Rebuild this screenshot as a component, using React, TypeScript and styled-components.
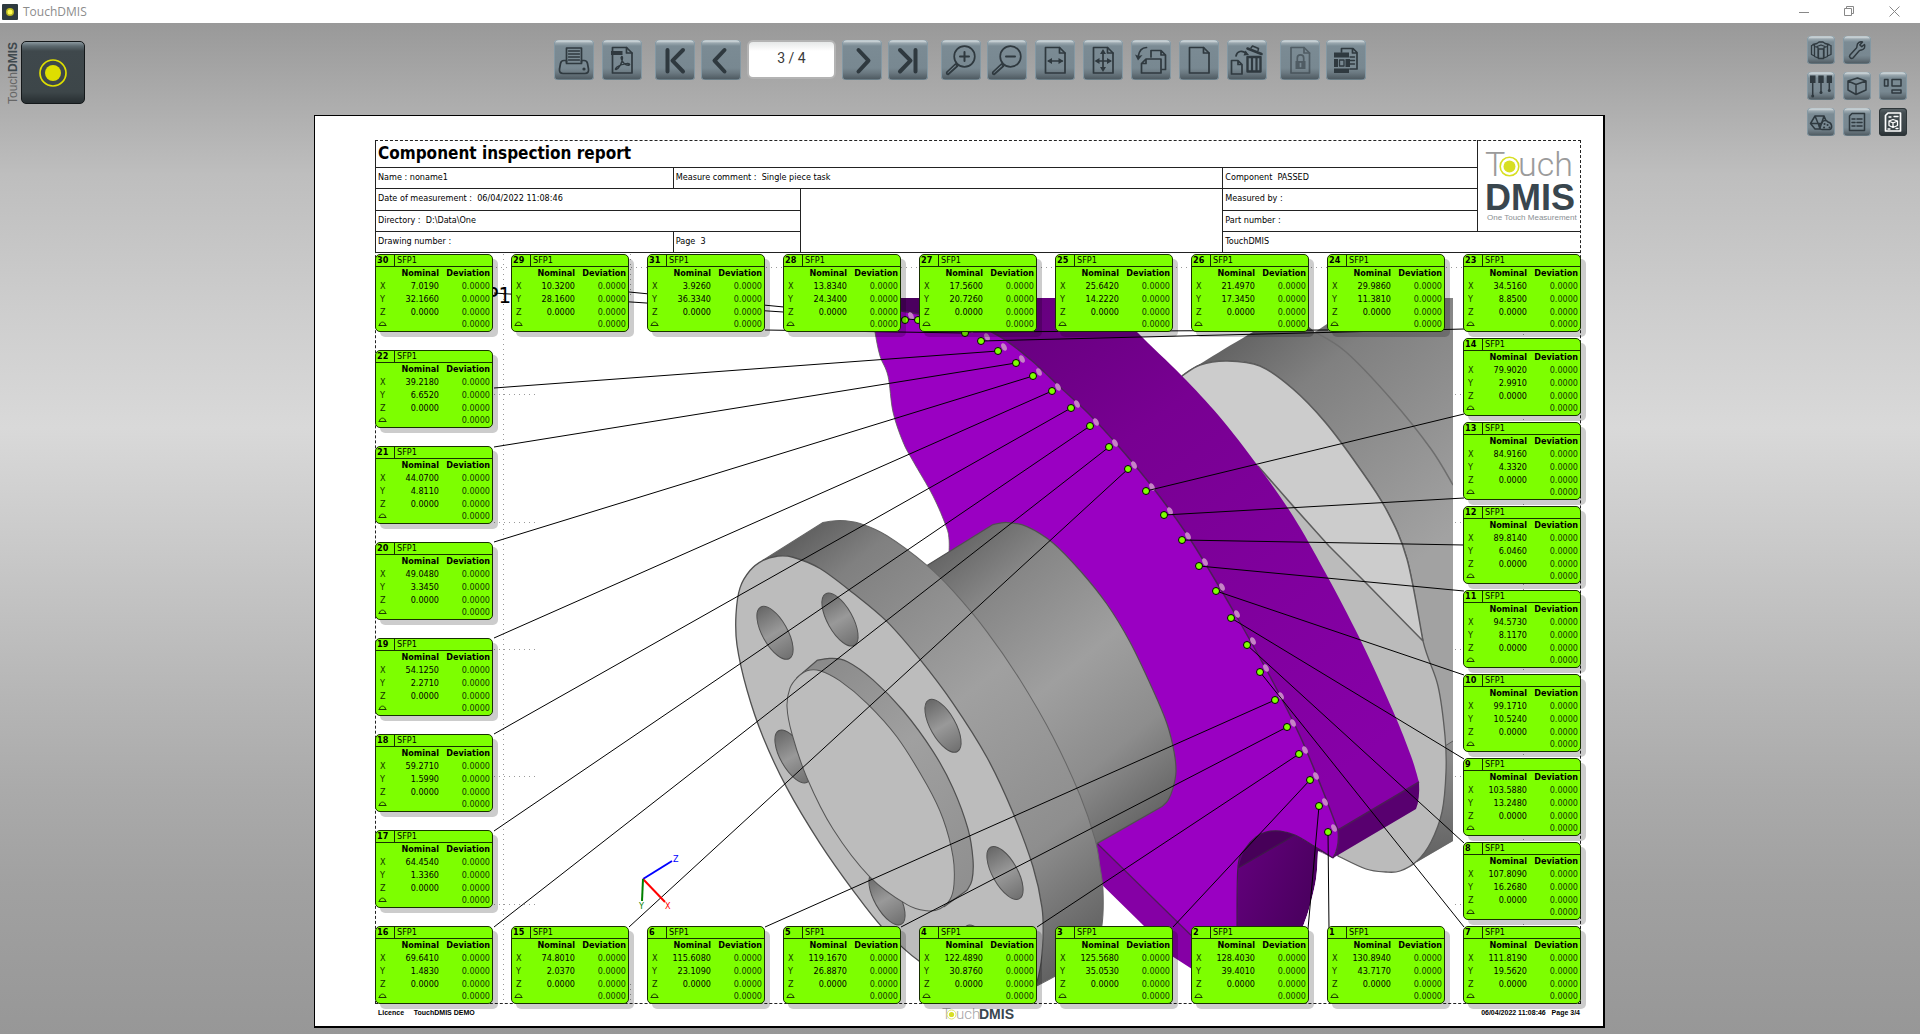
import React from "react";
import styled, { createGlobalStyle, css } from "styled-components";

const GlobalStyle = createGlobalStyle`
  *, *::before, *::after { box-sizing: border-box; }
  body { margin: 0; background: #999; }
  button, input { font: inherit; }
`;

const ink = "#2f393f";
const lime = "#7dff00";
const uiFont = `"DejaVu Sans Condensed", "DejaVu Sans", sans-serif`;
const brandFont = `"Liberation Sans", Arial, sans-serif`;

/* ---------- window ---------- */

const Window = styled.div`
  min-height: 100vh;
  display: flex;
  flex-direction: column;
  font-family: ${uiFont};
  color: #000;
`;

const TitleBar = styled.header`
  height: 23px;
  padding: 0 12px 0 2px;
  background: #fff;
  display: flex;
  align-items: center;
  gap: 5px;
`;

const WindowTitle = styled.h1`
  margin: 0;
  flex: 1;
  font: 400 12px/20px "Open Sans", "Noto Sans", sans-serif;
  color: #8c8c8c;
`;

const CaptionButtons = styled.div`
  display: flex;
  gap: 17px;
`;

const CaptionButton = styled.button`
  width: 28px;
  height: 20px;
  padding: 0;
  border: 0;
  background: none;
  display: grid;
  place-items: center;
`;

const Workspace = styled.main`
  flex: 1;
  display: grid;
  grid-template-columns: 314fr 1291fr 315fr;
  align-items: start;
  padding-bottom: 6px;
  background: linear-gradient(#999 0%, #a8a8a8 6%, #bebebe 15%, #cdcdcd 28%, #d9d9d9 40%, #c9c9c9 52%, #b5b5b5 67%, #aaa 76%, #a1a1a1 85%, #979797 100%);
`;

const Brand = styled.div`
  display: flex;
  padding: 18px 0 0 6px;
`;

const BrandText = styled.span`
  writing-mode: vertical-rl;
  transform: rotate(180deg);
  width: 15px;
  font: 12px/15px ${brandFont};
  color: #666;
  b { color: #3e484d; }
`;

const BrandButton = styled.button`
  width: 64px;
  height: 63px;
  padding: 0;
  border: 1px solid #14181a;
  border-radius: 5px;
  background: linear-gradient(#8b989f 0, #5c696f 4px, #3f484c 9px, #3d4649 50px, #272e31 100%);
  display: grid;
  place-items: center;
`;

const Centre = styled.div`
  padding-top: 17px;
  display: flex;
  flex-direction: column;
  gap: 35px;
`;

const Toolbar = styled.div`
  display: flex;
  justify-content: center;
  gap: 13px;
  padding-left: 1px;
`;

const Group = styled.div<{ $gap: number }>`
  display: flex;
  gap: ${(p) => p.$gap}px;
`;

const ToolButton = styled.button<{ $size?: number; $active?: boolean }>`
  width: ${(p) => p.$size ?? 40}px;
  height: ${(p) => p.$size ?? 40}px;
  padding: 0;
  border: 0;
  border-radius: 4px;
  background: linear-gradient(#aab9c0 0, #d3dbde 1px, #9aa8af 3px, #7b8b94 6px, #788891 70%, #6b7981 82%, #505c63 97%, #7b929d 100%);
  box-shadow: inset 1px 0 #8498a3, inset -1px 0 #8498a3;
  display: grid;
  place-items: center;
  svg { display: block; }
  ${(p) =>
    p.$active &&
    css`
      background: linear-gradient(#5e686d 0, #434c50 5px, #3a4347 80%, #262d30 100%);
      box-shadow: inset 0 0 0 1px #2e3639;
    `}
`;

const PageInput = styled.input`
  width: 89px;
  height: 39px;
  padding: 0 0 3px;
  border: 2px solid #b3b3b3;
  border-radius: 6px;
  background: linear-gradient(#e6e8e8, #fff 9px);
  font: 400 14px/20px Roboto, sans-serif;
  color: #3a3a3a;
  text-align: center;
`;

const Tools = styled.nav`
  justify-self: end;
  padding: 13px 13px 0 0;
  display: grid;
  grid-template-columns: repeat(3, 28px);
  gap: 8px;
`;

const RowEnd = styled.span``;

/* ---------- report sheet ---------- */

const Sheet = styled.article`
  background: #fff;
  border: solid #000;
  border-width: 1px 2px 2px 1px;
  padding: 24px 22px 0 60px;
`;

const Frame = styled.div`
  outline: 1px dashed #222;
  outline-offset: -1px;
`;

const HeaderGrid = styled.section`
  display: grid;
  grid-template-columns: 298fr 127fr 423fr 255fr 103fr;
  grid-template-rows: 28px 21px 22px 21px 21px;
  border-left: 1px solid #222;
`;

const Cell = styled.div<{ $col: string; $row: string; $edge?: boolean }>`
  grid-column: ${(p) => p.$col};
  grid-row: ${(p) => p.$row};
  border-bottom: 1px solid #222;
  border-right: ${(p) => (p.$edge ? "0" : "1px solid #222")};
  padding: 0 2px 2px;
  font-size: 9px;
  line-height: 17px;
  white-space: pre;
  display: flex;
  align-items: center;
`;

const ReportTitle = styled.h2`
  margin: 0;
  font-size: 17px;
  line-height: 24px;
  font-weight: 700;
`;

const Body = styled.section`
  position: relative;
  margin-top: 1px;
`;

const Scene = styled.svg`
  position: absolute;
  inset: 0;
  width: 100%;
  height: 100%;
`;

const CardRow = styled.div`
  position: relative;
  display: grid;
  grid-template-columns: repeat(9, 1fr);
  gap: 18px;
`;

const Sides = styled.div`
  position: relative;
  display: grid;
  grid-template-columns: repeat(9, 1fr);
  gap: 18px;
`;

const Stack = styled.div<{ $gap: number; $column: number }>`
  grid-column: ${(p) => p.$column};
  display: flex;
  flex-direction: column;
  gap: ${(p) => p.$gap}px;
  padding: ${(p) => p.$gap}px 0;
`;

const Card = styled.div`
  border: 1px solid #173000;
  border-radius: 5px;
  background: ${lime};
  box-shadow: 5px 5px 0 rgba(0, 0, 0, 0.2);
  font-size: 9px;
  line-height: 11px;
  padding-bottom: 1px;
`;

const CardHead = styled.div`
  display: flex;
  height: 12px;
  border-bottom: 1px solid #173000;
`;

const CardNumber = styled.b`
  width: 19px;
  padding-left: 1px;
  border-right: 1px solid #173000;
`;

const CardName = styled.span`
  padding-left: 2px;
`;

const Values = styled.table`
  width: 100%;
  table-layout: fixed;
  border-collapse: collapse;
  th, td {
    height: 13px;
    padding: 0 2px 0 0;
    line-height: 12px;
    text-align: right;
    white-space: nowrap;
  }
  thead th, tr:last-child th, tr:last-child td { height: 12px; }
  tbody th { font-weight: 400; text-align: left; padding-left: 4px; color: #143200; }
  td + td { color: #143800; }
  col:nth-child(1) { width: 19px; }
  col:nth-child(2) { width: 46px; }
  svg { display: block; margin-left: -2px; }
`;

const Footer = styled.footer`
  height: 22px;
  display: grid;
  grid-template-columns: 1fr auto 1fr;
  align-items: start;
  font: 700 7px/16px ${brandFont};
  padding: 1px 1px 0 3px;
  white-space: pre;
`;

const FooterEnd = styled.span`
  text-align: right;
`;

/* ---------- icons ---------- */

type IconName = keyof typeof big;

const page = (x = 10.5, w = 19.5, y = 7.5, h = 25.5) => (
  <>
    <path d={`M${x} ${y}h${w - 5.5}l5.5 5.5v${h - 5.5}h${-w}z`} />
    <path d={`M${x + w - 5.5} ${y}v5.5h5.5`} />
  </>
);
const fill = { fill: ink, stroke: "none" };

const big = {
  print: (
    <>
      <path d="M12.5 22V8h15v14" /><path d="M14.500 11h11M14.500 14h11M14.500 17h11M14.500 20h11" strokeWidth={1.3} />
      <path d="M12.500 20.500H10Q7 20.500 6.500 23.500L5.500 29Q5 33.500 9 33.500H31Q35 33.500 34.500 29L33.500 23.500Q33 20.500 30 20.500H27.500V23.500H12.500Z" />
      <circle cx="30" cy="29" r="1.6" {...fill} />
    </>
  ),
  pdf: (
    <>
      {page(10.5, 19.5)}
      <path d="M9 11h11.500v4H9z" {...fill} />
      <path d="M14 29.500c3-1 6.500-7 6.500-11.500 0-2.500-2-1.500-1.200.8 1.200 4 4.500 7 7.700 6.400 1.500-.7.3-2-2-1.700-3.500.3-7 1.200-10 3.500-1.800 1.500-2 2.700-1 2.500z" strokeWidth={1.4} />
    </>
  ),
  first: <path d="M12.500 10v21.500M28 10 17.500 20.700 28 31.500" strokeWidth={4} />,
  prev: <path d="M23.500 10 13.500 20.700l10 10.800" strokeWidth={4} />,
  next: <path d="m16.500 10 10 10.700-10 10.800" strokeWidth={4} />,
  last: <path d="m12 10 10.500 10.700L12 31.500M27.500 10v21.500" strokeWidth={4} />,
  zoomIn: (
    <>
      <circle cx="23.500" cy="16.500" r="10.300" /><path d="M23.500 12v9M19 16.500h9" strokeWidth={2} />
      <path d="m14.500 24-8.500 8q-1 2 1 2.500l9.500-8.500z" />
    </>
  ),
  zoomOut: (
    <>
      <circle cx="23.500" cy="16.500" r="10.300" /><path d="M19 16.500h9" strokeWidth={2} />
      <path d="m14.500 24-8.500 8q-1 2 1 2.500l9.500-8.500z" />
    </>
  ),
  fitWidth: (
    <>
      {page()}
      <path d="M14 21h13" /><path d="m12 21 5-3v6zM28.500 21l-5-3v6z" {...fill} />
    </>
  ),
  fitPage: (
    <>
      {page()}
      <path d="M14 21h13M20 12v17" />
      <path d="m11.500 21 5-3v6zM29 21l-5-3v6zM20 9l-3 5h6zM20 32l-3-5h6z" {...fill} />
    </>
  ),
  rotate: (
    <>
      <path d="M20 17v-6.500h10l4.500 4.500v14.500H31M30 10.500V15h4.500" />
      <path d="M15 19h15v14H10.500v-9.500zM15 19v4.500h-4.500" />
      <path d="M15.500 7.500C10 7.500 8 11 7 17" /><path d="m7 20.500-3-6 3.500 1.500 4-1z" {...fill} />
    </>
  ),
  blank: page(),
  remove: (
    <>
      <path d="M4.500 20.500h6.500l4 4V34H4.500zM11 20.500v4h4" />
      <path d="M9 16c1-5 6-6 10-3" /><path d="m22 15-5.500.5 2-5z" {...fill} />
      <path d="M20.500 17h13v14.500h-13z" strokeWidth={2.4} /><path d="M25 18v13M29.500 18v13" strokeWidth={2.200} />
      <path d="m20.500 8.500 14 5.500" strokeWidth={2.6} /><path d="m24 8 1.500-2 6 2.500-.5 2" strokeWidth={1.500} />
    </>
  ),
  lock: (
    <g opacity=".55">
      {page(11, 18.5)}
      <path d="M15.500 21h10v8h-10z" {...fill} /><path d="M17.300 21v-3a3.200 3.200 0 0 1 6.400 0v3" /><path d="M20.500 23.500v3" stroke="#788891" />
    </g>
  ),
  layout: (
    <>
      <path d="M15.500 12V8.500H27l4 4V29h-7M26.500 8.500V13H31" /><path d="M24 17h4.500M24 20.500h4.500M24 24h4.500" strokeWidth={1.400} />
      <path d="M8 12.500h15v5H8zM8 19h4v8H8zM19.500 19H24v8h-4.500zM8 28.500h15v4.500H8z" {...fill} />
      <path d="M13.500 20h4.500v6h-4.500z" strokeWidth={1.3} />
    </>
  ),
};

const Icon = ({ name }: { name: IconName }) => (
  <svg width="40" height="40" viewBox="0 0 40 40" fill="none" stroke={ink} strokeWidth="1.7" strokeLinecap="round" strokeLinejoin="round" aria-hidden="true">
    {big[name]}
  </svg>
);

const smallIcons: { label: string; art: React.ReactNode; active?: boolean; endsRow?: boolean }[] = [
  {
    label: "Fixtures",
    art: (
      <>
        <path d="M4.500 9.500 7.500 8.500V20l-3-1.500zM7.500 10.500l3.500 1v10.500l-3.500-1.500zM11.500 13h5v9.500h-5zM17 11.500l3.500-1v10L17 22zM20.500 8.500l3.500 1v9L20.500 20z" strokeWidth={1.300} />
        <path d="M6 8.500 10 7.500 12 6h4l2 1.500 4 1M10 10.500 14 9l4 1.500" strokeWidth={1.300} />
      </>
    ),
  },
  { label: "Settings", endsRow: true, art: <path d="M19.500 6c-2-1-5.500.5-5.500 4 0 1-.2 1.500-.8 2.200L7 19c-1.500 2 1 4.500 3 3l6-7c.7-.7 1.500-.8 2.500-1 3-.5 3.800-3 3-5.500l-2.700 2.200-2-1.700z" /> },
  { label: "Probes", art: <><path d="M3 3.500h5.500v7.500H3zM11.300 3.500h5.400v7.500h-5.400zM19.700 3.500h5.300v7.500h-5.300z" {...fill} /><path d="M5.700 10v13M14 10v10M22.300 10v8" /><circle cx="5.700" cy="24" r="1.500" {...fill} /><circle cx="14" cy="20.500" r="1.500" {...fill} /><circle cx="22.300" cy="18.500" r="1.500" {...fill} /></> },
  { label: "Model", art: <path d="m5 9 9.500-3 8.500 3v9l-10 4.500L5 18zM5 9l8 3.500L23 9M13 12.500v10" /> },
  { label: "Windows", art: <path d="M5.500 7.500H9V14H5.500zM13 7.500h9V14h-9zM13 18h9v3h-9z" /> },
  { label: "Geometry", art: <><path d="M8 8h9l2 4.500M8 8l-4.500 7.500 4.500 5.500h5M8 8l5 12 4-12M3.500 15.500h10" /><path d="M13 20.500a3.500 3.500 0 0 1 2-5.500c.5-3 4.500-3.500 6-1 4 .5 5 6.500 1.500 7.500H15q-1.500 0-2-1z" /><path d="M17.500 16h.1M20.500 17h.1M17 19.500h.1M22.500 19.500h.1" strokeWidth={2} /></> },
  { label: "Results", art: <><path d="M9 5.500h12.500v17h-15V8z" /><path d="M9 11h3M9 14.500h3M9 18h3M14 11h5M14 14.500h5M14 18h5" /></> },
  { label: "Report", active: true, art: <g stroke="#fff"><path d="M9 5h12.500v18h-15V7.500z" strokeWidth={1.700} /><path d="m10 13 4-1.500 4.500 1.500v4.500L14 19.500l-4-2zM10 13l4 2 4.500-2M14 15v4.500M10 9h2M15 8.500h4M9 21h2M17 20.500h2" strokeWidth={1.300} /></g> },
];

/* ---------- logo ---------- */

const ReportLogo = styled.svg`
  display: block;
  margin: auto;
`;

const Logo = () => (
  <ReportLogo width="96" height="84" viewBox="0 0 96 84" fontFamily={brandFont}>
    <g fill="#9b9b9b" fontFamily='Roboto, "Liberation Sans", sans-serif' fontWeight="300" fontSize="34">
      <text x="3" y="33">T</text><text x="36" y="33">uch</text>
    </g>
    <circle cx="27.500" cy="23.500" r="9.300" fill="#fff" stroke="#d7df23" strokeWidth="1.600" /><circle cx="27.500" cy="23.500" r="6" fill="#d7df23" />
    <text x="3" y="67" fontSize="36" fontWeight="700" fill="#39464e">DMIS</text>
    <text x="5" y="77" fontSize="8" fill="#8a8f93">One Touch Measurement</text>
  </ReportLogo>
);

const FooterLogo = () => (
  <svg width="76" height="17" viewBox="0 0 76 17" fontFamily={brandFont} fontSize="15">
    <g fill="#a5a5a5" fontFamily='Roboto, "Liberation Sans", sans-serif' fontWeight="300">
      <text x="1" y="14">T</text><text x="15" y="14">uch</text>
    </g>
    <circle cx="10.500" cy="9.500" r="4.500" fill="#fff" stroke="#dfe56a" /><circle cx="10.500" cy="9.500" r="2.600" fill="#d7df23" />
    <text x="38" y="14" fontSize="14" fontWeight="700" fill="#39464e">DMIS</text>
  </svg>
);

/* ---------- model view ---------- */

/** Smooth path through "x,y" points; `lead` is the command used for the first point. */
function curve(points: string, lead = "M", closed = false) {
  const p = points.trim().split(/\s+/).map((s) => s.split(",").map(Number));
  const n = p.length;
  const at = (i: number) => (closed ? p[(i + n) % n] : p[Math.max(0, Math.min(n - 1, i))]);
  let d = `${lead}${p[0][0]} ${p[0][1]}`;
  for (let i = 0; i < (closed ? n : n - 1); i++) {
    const [a, b, c, e] = [at(i - 1), at(i), at(i + 1), at(i + 2)];
    d += `C${b[0] + (c[0] - a[0]) / 6} ${b[1] + (c[1] - a[1]) / 6} ${c[0] - (e[0] - b[0]) / 6} ${c[1] - (e[1] - b[1]) / 6} ${c[0]} ${c[1]}`;
  }
  return closed ? d + "Z" : d;
}

const bandInner = "901,312 925,316 960,320 999,337 1031,361 1060,388 1089,415 1121,450 1154,490 1186,534 1211,574 1238,620 1273,683 1300,737 1321,787 1338,831";
const bandOuter = "1105,299 1137,333 1182,377 1219,417 1258,467 1293,517 1325,573 1360,640 1393,712 1411,757 1419,783";
const faceLeft = "878,299 874,320 875,333 880,357 888,377 893,413 903,443 913,462 933,497 946,527 949,540 949,556";
const arch = "1237,930 1238,867 1245,850 1256,838 1266,833 1280,832 1295,836 1314,847 1333,859";
const rearFace = "1182,377 1200,366 1227,362 1260,367 1293,390 1325,423 1358,467 1386,510 1407,560 1423,642 1438,687 1445,737 1446,773 1442,813 1431,843 1417,862 1400,872 1386,873 1366,870 1338,857";
const hub = "993,525 1007,523 1027,527 1053,543 1080,570 1107,603 1130,640 1153,687 1167,720 1174,747 1176,767 1173,783 1168,795 1162,801";
const flangeBack = "823,523 840,521 860,524 887,536 927,565 953,590 987,630 1020,677 1053,733 1080,790 1095,833 1100,860 1103,883 1102,917 1094,943";
const flangeFace = "763,560 777,556 793,557 820,568 853,592 887,620 920,657 953,700 987,753 1013,807 1033,860 1042,900 1043,930 1040,960 1033,978 1010,987 970,982 920,953 883,920 853,883 820,837 787,783 763,733 747,687 737,643 736,613 740,587 750,570";
const bossFace = "797,675 807,668 820,668 840,678 867,700 897,733 927,780 943,813 953,850 954,877 950,892 940,901 927,903 907,897 870,870 833,823 807,773 792,730 787,703 790,685";
const bossBack = "817,658 830,656 847,659 873,677 903,707 933,747 953,783 968,823 973,853 972,873 967,883";
const holes = [[775, 631], [840, 618], [943, 722], [1005, 866], [793, 752], [887, 891], [981, 943]];

const leaders: [number, number, number, number][] = [
  [494, 389, 998, 352], [494, 448, 1016, 364], [494, 543, 1033, 377], [494, 639, 1052, 392],
  [494, 735, 1071, 409], [494, 832, 1090, 427], [494, 928, 1109, 448], [629, 928, 1128, 470],
  [765, 928, 1275, 701], [901, 928, 1287, 728], [1037, 928, 1299, 755], [1173, 928, 1310, 781],
  [1308, 930, 1319, 807], [1329, 930, 1328, 833], [1464, 415, 1146, 492], [1464, 499, 1164, 516],
  [1464, 546, 1182, 541], [1464, 592, 1199, 567], [1464, 676, 1216, 592], [1464, 760, 1231, 619],
  [1464, 844, 1247, 646], [1464, 928, 1260, 673], [1464, 330, 981, 342],
  [629, 293, 918, 321], [494, 294, 905, 321], [765, 331, 965, 334], [965, 333, 1328, 331],
];

const ModelView = () => (
  <Scene viewBox="375 255 1206 750" preserveAspectRatio="none" aria-label="Model view">
    <defs>
      <linearGradient id="barrel" gradientUnits="userSpaceOnUse" x1="965" y1="520" x2="1190" y2="800">
        <stop offset="0" stopColor="#606060" /><stop offset=".2" stopColor="#868686" /><stop offset=".5" stopColor="#9f9f9f" /><stop offset=".75" stopColor="#8d8d8d" /><stop offset="1" stopColor="#5e5e5e" />
      </linearGradient>
      <linearGradient id="rim" gradientUnits="userSpaceOnUse" x1="770" y1="540" x2="1100" y2="960">
        <stop offset="0" stopColor="#585858" /><stop offset=".13" stopColor="#808080" /><stop offset=".45" stopColor="#a0a0a0" /><stop offset=".75" stopColor="#8e8e8e" /><stop offset="1" stopColor="#585858" />
      </linearGradient>
      <linearGradient id="rear" gradientUnits="userSpaceOnUse" x1="1230" y1="330" x2="1420" y2="560">
        <stop offset="0" stopColor="#606060" /><stop offset=".3" stopColor="#808080" /><stop offset="1" stopColor="#a2a2a2" />
      </linearGradient>
      <linearGradient id="rearLow" gradientUnits="userSpaceOnUse" x1="1440" y1="700" x2="1450" y2="860">
        <stop offset="0" stopColor="#a0a0a0" /><stop offset="1" stopColor="#626262" />
      </linearGradient>
      <linearGradient id="band" gradientUnits="userSpaceOnUse" x1="1020" y1="310" x2="1360" y2="760">
        <stop offset="0" stopColor="#66007e" /><stop offset=".3" stopColor="#780092" /><stop offset="1" stopColor="#8700a8" />
      </linearGradient>
      <linearGradient id="bore" gradientUnits="userSpaceOnUse" x1="1240" y1="850" x2="1315" y2="880">
        <stop offset="0" stopColor="#62007b" /><stop offset="1" stopColor="#4c0061" />
      </linearGradient>
      <linearGradient id="hole" x1="0" y1="0" x2="1" y2="0">
        <stop offset="0" stopColor="#676767" /><stop offset=".5" stopColor="#999" /><stop offset="1" stopColor="#707070" />
      </linearGradient>
      <clipPath id="viewport"><rect x="512" y="299" width="941" height="706" /></clipPath>
      <clipPath id="face"><path d={curve(flangeFace, "M", true)} /></clipPath>
    </defs>

    <g stroke="#9a9a9a" strokeDasharray="1 4" fill="none">
      <path d="M503.500 255V1004M630.500 255V300M630.500 985V1004M1523.500 255V1004M376 268.500H1582" />
      {[395.5, 523.5, 650.5, 777.5, 905.5].map((y) => <path key={y} d={`M494 ${y}H535M1455 ${y}H1464`} />)}
    </g>
    <text x="511" y="304" textAnchor="end" fontSize="22" fontFamily={uiFont}>P1</text>

    <g clipPath="url(#viewport)" strokeLinejoin="round">
      <path fill="url(#rear)" d={curve("1182,377 1208,360 1253,333 1280,318 1300,322 1315,333") + "L1327 325L1370 299H1453V842L1417 863Z"} />
      <path fill="url(#rearLow)" d="M1445 747L1453 742V842L1417 863Z" />
      <path fill="none" stroke="#6e6e6e" strokeWidth="1.500" d={curve("1315,333 1346,353 1391,400 1431,450 1453,486")} />
      <path fill="#bbb" stroke="#5c5c5c" strokeWidth="1.300" d={curve(rearFace) + "Z"} />
      <path fill="#ccc" d={curve("1182,377 1200,366 1227,362 1260,367 1293,390 1325,423 1358,467 1386,510 1407,560 1423,642") + "L1366 583L1329 547L1293 505L1258 467Z"} />
      <path fill="none" stroke="#5c5c5c" strokeWidth="1.500" d={"M1258 467L1293 507L1329 547L1366 584L1423 642" + curve("1182,377 1200,366 1227,362 1260,367 1293,390 1325,423 1358,467 1386,510 1407,560 1423,642")} />
      <path stroke="#5c5c5c" d="M1445 747L1453 742" />

      <path fill="url(#band)" d={curve(bandOuter) + curve(bandInner.split(" ").reverse().join(" "), "L") + "L901 299Z"} />
      <path fill="#4b005f" d="M878 299H921V316L901 312H876Z" />
      <path fill="#9a00c2" d={curve(bandInner) + "V847L1333 859" + curve(arch.split(" ").reverse().join(" "), "L") + "V1000L1097 845L949 620V556" + curve(faceLeft.split(" ").reverse().join(" "), "L") + "L876 312Z"} />
      <path fill="url(#bore)" d={curve(arch) + curve("1318,852 1316,880 1309,910 1302,930", "L") + "Z"} />
      <path fill="#470059" d={curve("1238,869 1245,850 1256,838 1266,833 1280,832 1295,836") + "Z"} />
      <path fill="#fff" d={curve("1318,853 1316,880 1309,910 1302,930") + "H1340L1334 860Z"} />
      <path fill="#bbb" d="M1318 852L1333 859L1322 853Z" />
      <path fill="none" stroke="#3f1a4a" strokeWidth="1.200" d={curve(arch) + "M1238 869L1295 836"} />
      <path fill="#58006f" d="M1338 831L1419 783Q1420 800 1416 810L1333 859Q1340 848 1338 831Z" />
      <path fill="none" stroke="#4d1c58" strokeWidth="1.500" d={curve(bandInner) + "Q1340 848 1333 859M1338 831L1419 783"} />
      <path fill="none" stroke="#5c5c5c" strokeWidth=".8" d={curve(faceLeft)} />

      <g transform="matrix(1 0 0 1.0217 0 -10.85)">
        <path fill="#8500a5" d="M1090 838H1098L1192 928L1240 975V1000L1192 960L1173 948L1143 917L1090 866Z" />
        <path stroke="#4d1c58" strokeWidth="1.300" d="M1097 837L1192 928" />
        <path fill="url(#barrel)" stroke="#505050" strokeWidth="1.200" d={"M927 565" + curve(hub, "L") + "L1092 840Z"} />
        <path fill="url(#rim)" stroke="#666" d={"M763 560" + curve(flangeBack, "L") + "Q1085 952 1036 977Z"} />
        <path fill="#bcbcbc" stroke="#505050" strokeWidth="1.300" d={curve(flangeFace, "M", true)} />
        <g clipPath="url(#face)">
          {holes.map(([x, y]) => (
            <g key={`${x}`} transform={`translate(${x} ${y}) rotate(60)`}>
              <ellipse rx="29" ry="12.500" fill="url(#hole)" stroke="#505050" />
            </g>
          ))}
        </g>
        <path fill="url(#rim)" stroke="#505050" strokeWidth="1.200" d={"M797 675" + curve(bossBack, "L") + "L944 899Z"} />
        <path fill="#bcbcbc" stroke="#555" d={curve(bossFace, "M", true)} />
      </g>
    </g>

    {leaders.slice(0, 23).concat([[0, 0, 918, 321], [0, 0, 905, 321], [0, 0, 965, 334]]).map(([, , x, y]) => (
      <ellipse key={`s${x}`} cx={x + 6} cy={y - 4} rx="2.500" ry="4" fill="#c583c6" transform={`rotate(-25 ${x + 6} ${y - 4})`} />
    ))}
    <g stroke="#000" strokeWidth="1">
      {leaders.map(([x1, y1, x2, y2]) => <line key={`${x1}-${y1}-${x2}`} x1={x1} y1={y1} x2={x2} y2={y2} />)}
    </g>
    <g fill={lime} stroke="#000">
      {leaders.slice(0, 26).map(([, , x, y]) => <circle key={`${x}-${y}`} cx={x} cy={y} r="3.500" />)}
    </g>

    <g strokeWidth="2" fontSize="9" fontFamily={uiFont}>
      <path stroke="#00f" d="M643 880L672 862" /><path stroke="red" d="M643 880L665 903" /><path stroke="green" d="M643 880L642 902" />
      <g stroke="none">
        <text x="673" y="863" fill="#00f">Z</text><text x="665" y="910" fill="red">X</text><text x="639" y="910" fill="green">Y</text>
      </g>
    </g>
  </Scene>
);

/* ---------- measurement cards ---------- */

type Point = [number, string, string];

const top: Point[] = [[30, "7.0190", "32.1660"], [29, "10.3200", "28.1600"], [31, "3.9260", "36.3340"], [28, "13.8340", "24.3400"], [27, "17.5600", "20.7260"], [25, "25.6420", "14.2220"], [26, "21.4970", "17.3450"], [24, "29.9860", "11.3810"], [23, "34.5160", "8.8500"]];
const left: Point[] = [[22, "39.2180", "6.6520"], [21, "44.0700", "4.8110"], [20, "49.0480", "3.3450"], [19, "54.1250", "2.2710"], [18, "59.2710", "1.5990"], [17, "64.4540", "1.3360"]];
const right: Point[] = [[14, "79.9020", "2.9910"], [13, "84.9160", "4.3320"], [12, "89.8140", "6.0460"], [11, "94.5730", "8.1170"], [10, "99.1710", "10.5240"], [9, "103.5880", "13.2480"], [8, "107.8090", "16.2680"]];
const bottom: Point[] = [[16, "69.6410", "1.4830"], [15, "74.8010", "2.0370"], [6, "115.6080", "23.1090"], [5, "119.1670", "26.8870"], [4, "122.4890", "30.8760"], [3, "125.5680", "35.0530"], [2, "128.4030", "39.4010"], [1, "130.8940", "43.7170"], [7, "111.8190", "19.5620"]];

const PointCard = ({ point: [id, x, y] }: { point: Point }) => (
  <Card>
    <CardHead><CardNumber>{id}</CardNumber><CardName>SFP1</CardName></CardHead>
    <Values>
      <colgroup><col /><col /><col /></colgroup>
      <thead><tr><th /><th>Nominal</th><th>Deviation</th></tr></thead>
      <tbody>
        {[["X", x], ["Y", y], ["Z", "0.0000"]].map(([axis, value]) => (
          <tr key={axis}><th>{axis}</th><td>{value}</td><td>0.0000</td></tr>
        ))}
        <tr>
          <th>
            <svg width="9" height="6" viewBox="0 0 9 6" fill="none" stroke="#1c3a00" aria-label="Profile"><path d="M.5 4.500H8.500M1.500 4.500C1.500 0 7.500 0 7.500 4.500" /></svg>
          </th>
          <td /><td>0.0000</td>
        </tr>
      </tbody>
    </Values>
  </Card>
);

const cards = (points: Point[]) => points.map((p) => <PointCard key={p[0]} point={p} />);

const Tool = ({ name, label }: { name: IconName; label: string }) => (
  <ToolButton type="button" aria-label={label}><Icon name={name} /></ToolButton>
);

export default function App() {
  return (
    <Window>
      <GlobalStyle />
      <TitleBar>
        <svg width="16" height="16" viewBox="0 0 16 16" aria-hidden="true">
          <rect width="16" height="16" rx="1" fill="#2e3a3f" /><circle cx="8" cy="8" r="4" fill="#b8b620" /><circle cx="8" cy="8" r="2.500" fill="#fdfb50" />
        </svg>
        <WindowTitle>TouchDMIS</WindowTitle>
        <CaptionButtons>
          <CaptionButton type="button" aria-label="Minimize"><svg width="10" height="10"><path d="M0 5.500H10" stroke="#888" /></svg></CaptionButton>
          <CaptionButton type="button" aria-label="Restore"><svg width="11" height="11" fill="none" stroke="#888"><path d="M.5 2.500h7v7h-7zM2.500 2.500v-2h7v7h-2" /></svg></CaptionButton>
          <CaptionButton type="button" aria-label="Close"><svg width="11" height="11" stroke="#888"><path d="M.5 .5l10 10M10.500 .5l-10 10" /></svg></CaptionButton>
        </CaptionButtons>
      </TitleBar>

      <Workspace>
        <Brand>
          <BrandText>Touch<b>DMIS</b></BrandText>
          <BrandButton type="button" aria-label="Main menu">
            <svg width="30" height="30" viewBox="0 0 30 30"><circle cx="15" cy="15" r="13" fill="none" stroke="#dede00" strokeWidth="1.700" /><circle cx="15" cy="15" r="8" fill="#dede00" /></svg>
          </BrandButton>
        </Brand>

        <Centre>
          <Toolbar role="toolbar" aria-label="Report">
            <Group $gap={8}>
              <Tool name="print" label="Print" />
              <Tool name="pdf" label="Export PDF" />
            </Group>
            <Group $gap={6}>
              <Tool name="first" label="First page" />
              <Tool name="prev" label="Previous page" />
              <PageInput aria-label="Page" defaultValue="3 / 4" />
              <Tool name="next" label="Next page" />
              <Tool name="last" label="Last page" />
            </Group>
            <Group $gap={8}>
              <Group $gap={6}>
                <Tool name="zoomIn" label="Zoom in" />
                <Tool name="zoomOut" label="Zoom out" />
              </Group>
              <Tool name="fitWidth" label="Fit width" />
              <Tool name="fitPage" label="Fit page" />
              <Tool name="rotate" label="Rotate page" />
              <Tool name="blank" label="New page" />
              <Tool name="remove" label="Delete page" />
            </Group>
            <Group $gap={6}>
              <Tool name="lock" label="Lock" />
              <Tool name="layout" label="Layout" />
            </Group>
          </Toolbar>

          <Sheet>
            <Frame>
              <HeaderGrid>
                <Cell $col="1 / 5" $row="1"><ReportTitle>Component inspection report</ReportTitle></Cell>
                <Cell $col="5" $row="1 / 5" $edge><Logo /></Cell>
                <Cell $col="1" $row="2">Name : noname1</Cell>
                <Cell $col="2 / 4" $row="2">{"Measure comment :  Single piece task"}</Cell>
                <Cell $col="4" $row="2">{"Component  PASSED"}</Cell>
                <Cell $col="1 / 3" $row="3">{"Date of measurement :  06/04/2022 11:08:46"}</Cell>
                <Cell $col="3" $row="3 / 6" />
                <Cell $col="4" $row="3">Measured by :</Cell>
                <Cell $col="1 / 3" $row="4">{"Directory :  D:\\Data\\One"}</Cell>
                <Cell $col="4" $row="4">Part number :</Cell>
                <Cell $col="1" $row="5">Drawing number :</Cell>
                <Cell $col="2" $row="5">{"Page  3"}</Cell>
                <Cell $col="4 / 6" $row="5" $edge>TouchDMIS</Cell>
              </HeaderGrid>

              <Body>
                <ModelView />
                <CardRow>{cards(top)}</CardRow>
                <Sides>
                  <Stack $gap={18} $column={1}>{cards(left)}</Stack>
                  <Stack $gap={6} $column={9}>{cards(right)}</Stack>
                </Sides>
                <CardRow>{cards(bottom)}</CardRow>
              </Body>
            </Frame>
            <Footer>
              <span>{"Licence     TouchDMIS DEMO"}</span>
              <FooterLogo />
              <FooterEnd>{"06/04/2022 11:08:46   Page 3/4"}</FooterEnd>
            </Footer>
          </Sheet>
        </Centre>

        <Tools aria-label="Views">
          {smallIcons.map(({ label, art, active, endsRow }) => (
            <React.Fragment key={label}>
              <ToolButton type="button" $size={28} $active={active} aria-label={label}>
                <svg width="28" height="28" viewBox="0 0 28 28" fill="none" stroke={ink} strokeWidth="1.500" strokeLinejoin="round" strokeLinecap="round" aria-hidden="true">{art}</svg>
              </ToolButton>
              {endsRow && <RowEnd />}
            </React.Fragment>
          ))}
        </Tools>
      </Workspace>
    </Window>
  );
}
